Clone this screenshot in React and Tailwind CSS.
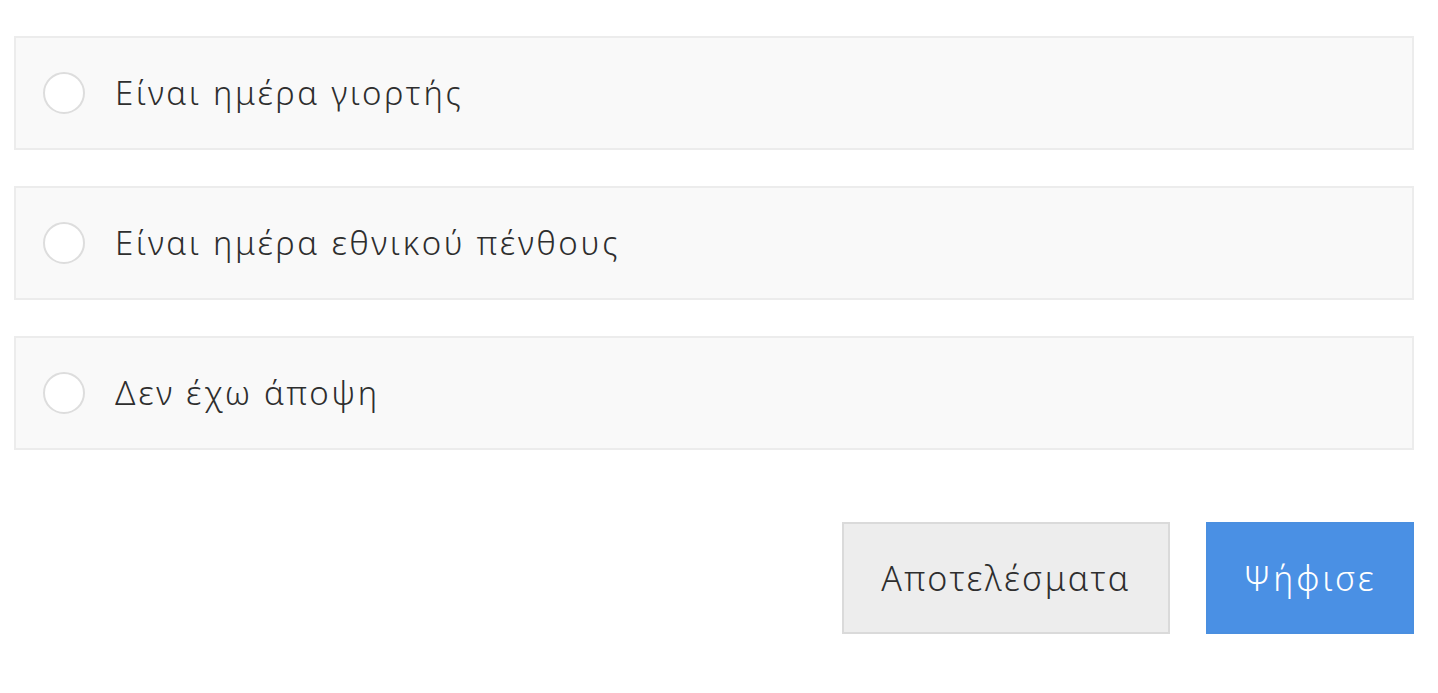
const options = ["Είναι ημέρα γιορτής", "Είναι ημέρα εθνικού πένθους", "Δεν έχω άποψη"];

export default function App() {
  return (
    <div className="min-h-screen bg-white pl-[14px] pr-[24px] pt-[36px] font-['Noto_Sans',sans-serif] text-[#333]">
      <div className="flex flex-col gap-[36px]">
        {options.map((o) => (
          <label
            key={o}
            className="flex h-[114px] items-center gap-[30px] border-2 border-[#ececec] bg-[#f9f9f9] pl-[27px]"
          >
            <span className="h-[42px] w-[42px] shrink-0 rounded-full border-2 border-[#dddddd] bg-white" />
            <span className="text-[33px] font-light tracking-[2.7px] text-[#2e2e2e]">{o}</span>
          </label>
        ))}
      </div>
      <div className="mt-[72px] flex justify-end gap-[36px]">
        <button className="h-[112px] w-[328px] border-2 border-[#dadada] bg-[#ededed] text-[34px] font-light tracking-[2.4px] text-[#2e2e2e]">
          Αποτελέσματα
        </button>
        <button className="h-[112px] w-[208px] border-2 border-[#4a8fe0] bg-[#4a90e4] text-[34px] font-light tracking-[3px] text-white">
          Ψήφισε
        </button>
      </div>
    </div>
  );
}
